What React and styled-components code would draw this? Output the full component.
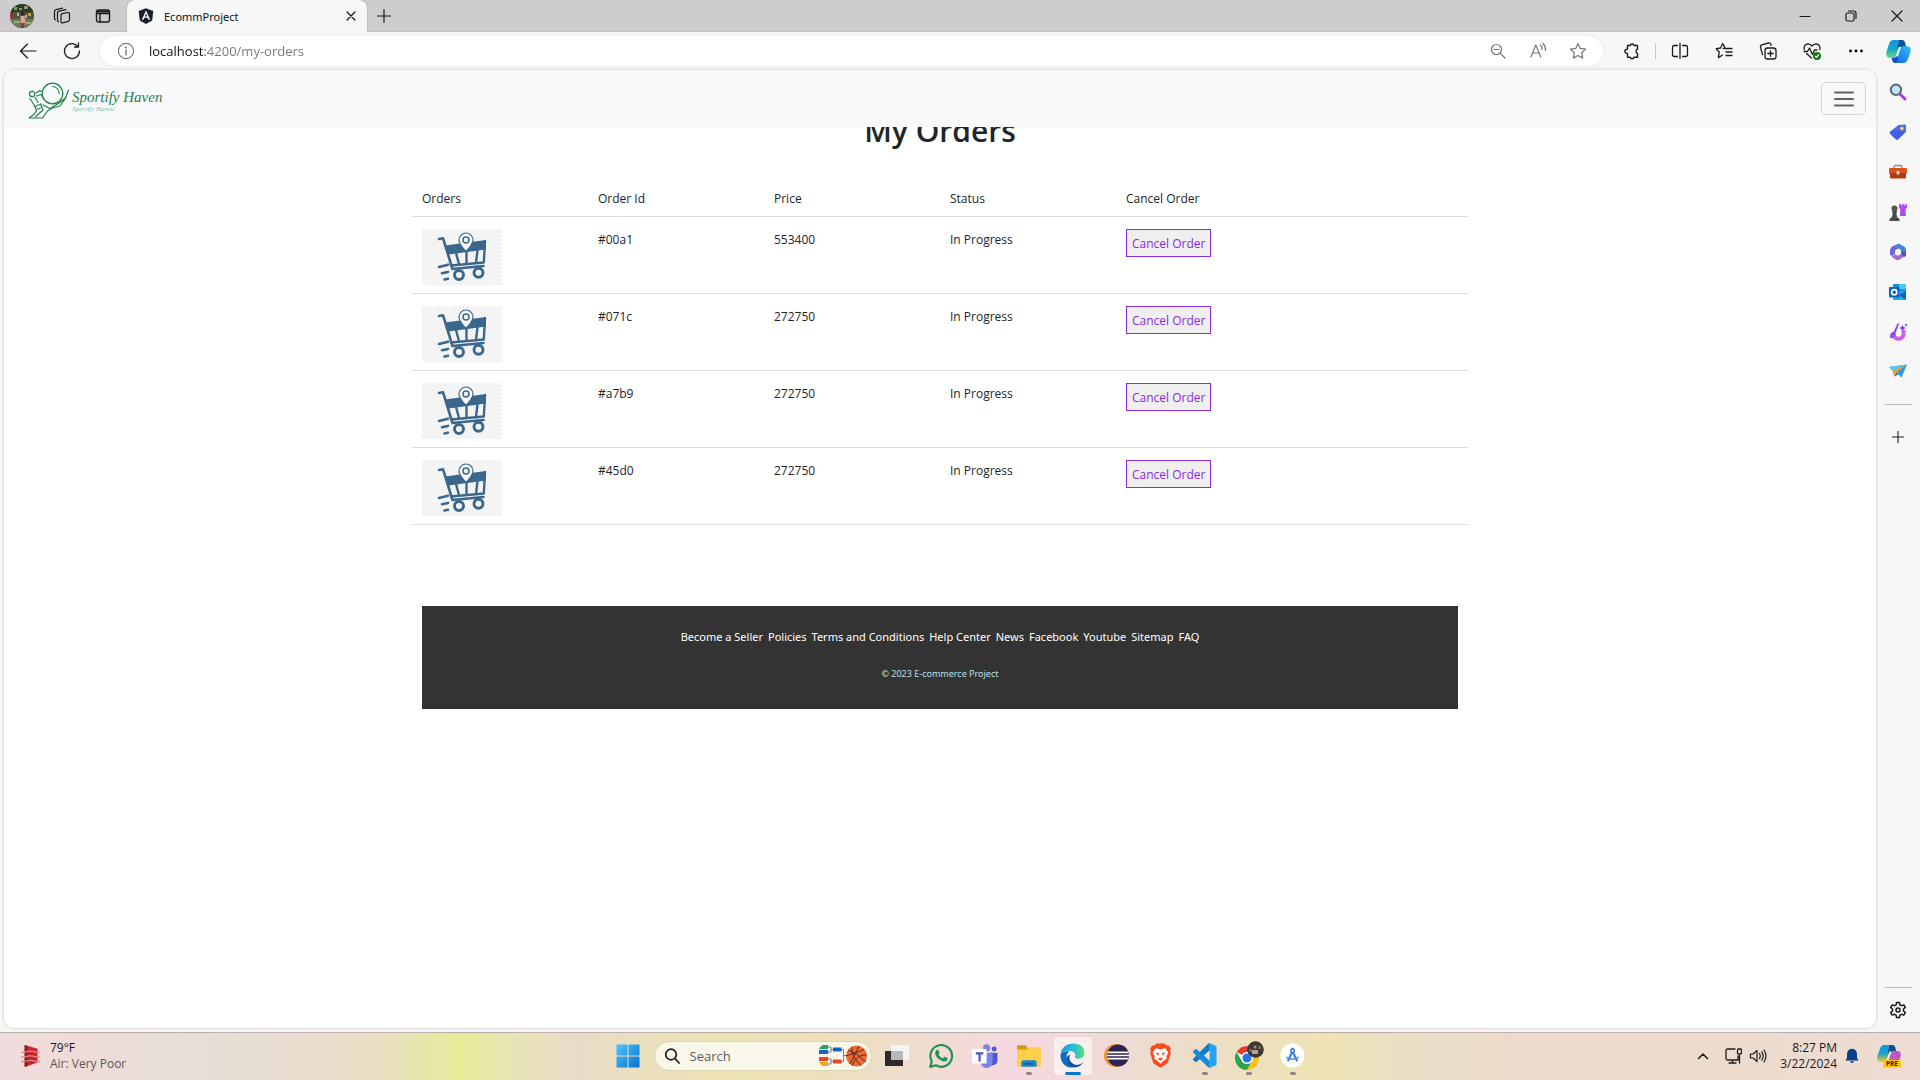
import React from "react";
import styled, { createGlobalStyle, css } from "styled-components";

const Global = createGlobalStyle`
  *, *::before, *::after { box-sizing: border-box; }
  body { margin: 0; font-family: "Open Sans", "Noto Sans", sans-serif; font-size: 12px; color: #212529; }
  button { font: inherit; color: inherit; border: 0; padding: 0; background: none; }
  input { font: inherit; border: 0; padding: 0; background: none; outline: 0; }
  svg { display: block; flex: none; }
`;

/* ---------- browser frame ---------- */

const Desktop = styled.div`
  min-height: 100vh;
  display: flex;
  flex-direction: column;
  background: #f7f7f7;
`;

const TitleBar = styled.header`
  display: flex;
  height: 32px;
  background: #cdcdcd;
  box-shadow: inset 0 -1px #c0c0c0;
  color: #111;
`;

const Cell = styled.button`
  display: flex;
  align-items: center;
  justify-content: center;
  width: ${(p) => p.$w || 44}px;
  height: ${(p) => (p.$h ? p.$h + "px" : "auto")};
  flex: none;
  color: ${(p) => p.$color || "#1b1b1b"};
`;

const Tab = styled.div`
  display: flex;
  align-items: center;
  gap: 10px;
  width: 240px;
  margin-left: 1px;
  padding: 0 2px 0 11px;
  background: #f7f7f7;
  border-radius: 8px 8px 0 0;
  box-shadow: 0 0 2px #999;
  clip-path: inset(-3px -3px 0 -3px);
`;

const TabTitle = styled.span`
  flex: 1;
  font-family: "Noto Sans", sans-serif;
  font-size: 11px;
`;

const Spacer = styled.div`
  flex: 1;
`;

const Toolbar = styled.div`
  display: flex;
  align-items: center;
  height: 38px;
  padding: 0 1px 0 6px;
`;

const AddressBar = styled.label`
  display: flex;
  align-items: center;
  flex: 1;
  height: 30px;
  margin: 0 7px 0 6px;
  padding: 0 5px 0 17px;
  border-radius: 15px;
  background: #fff;
  box-shadow: 0 0 3px #e2e2e2;
`;

const AddressInput = styled.input`
  flex: 1;
  min-width: 0;
  margin-left: 14px;
  font-size: 13px;
  color: transparent;
  background: linear-gradient(to right, #111 56px, #757575 56px);
  background-clip: text;
  -webkit-background-clip: text;
`;

const VRule = styled.div`
  width: 1px;
  height: 16px;
  margin: 0 2px 0 1px;
  background: #c6c6c6;
`;

const Body = styled.div`
  flex: 1;
  display: flex;
  padding: 0 0 4px 4px;
`;

const Viewport = styled.div`
  position: relative;
  flex: 1;
  background: #fff;
  border-radius: 10px;
  overflow: hidden;
  box-shadow: 0 0 3px #bbb;
`;

const SideBar = styled.nav`
  display: flex;
  flex-direction: column;
  align-items: center;
  width: 44px;
  padding-top: 2px;
`;

const HRule = styled.div`
  width: 28px;
  height: 1px;
  background: #bdbdbd;
  margin: ${(p) => p.$m};
`;

/* ---------- shop page ---------- */

const NavBar = styled.header`
  position: absolute;
  inset: 0 0 auto 0;
  z-index: 1;
  display: flex;
  align-items: center;
  justify-content: space-between;
  height: 57px;
  padding: 0 10px 0 24px;
  background: #f8f9fb;
`;

const Brand = styled.a`
  display: flex;
  align-items: center;
  gap: 2px;
  padding-top: 4px;
  color: #24804a;
  text-decoration: none;
  font-family: "Liberation Serif", serif;
  font-style: italic;
`;

const BrandText = styled.span`
  display: flex;
  flex-direction: column;
  font-size: 15px;
  line-height: 16px;
`;

const BrandSub = styled.small`
  font-size: 7px;
  line-height: 8px;
  color: #8fbfa3;
`;

const Toggler = styled.button`
  display: flex;
  align-items: center;
  justify-content: center;
  width: 45px;
  height: 33px;
  border: 1px solid #d3d4d6;
  border-radius: 5px;
  color: #616263;
`;

const Page = styled.main`
  max-width: 1056px;
  margin: 0 auto;
  padding-top: 43px;
`;

const Heading = styled.h1`
  margin: 0 0 31px;
  font-size: 30px;
  line-height: 36px;
  font-weight: 600;
  text-align: center;
`;

const Orders = styled.table`
  width: 100%;
  table-layout: fixed;
  border-spacing: 0;
  line-height: 22px;
`;

const cell = css`
  border-bottom: 1px solid #dcdcdc;
  text-align: left;
  vertical-align: top;
  font-weight: 400;
`;

const Th = styled.th`
  ${cell}
  padding: 8px 10px 6px;
`;

const Td = styled.td`
  ${cell}
  padding: 12px 10px 8px;
`;

const CancelButton = styled.button`
  display: block;
  height: 28px;
  padding: 1px 5px 0;
  border: 1px solid #8a2be2;
  background: #efefef;
  color: #8a2be2;
`;

const Footer = styled.footer`
  margin: 81px 10px 0;
  padding: 22px 20px 26px;
  background: #333;
  text-align: center;
  font-family: "Noto Sans", sans-serif;
  line-height: 18px;
`;

const FooterLinks = styled.nav`
  display: flex;
  flex-wrap: wrap;
  justify-content: center;
  gap: 0 5px;
  margin-bottom: 19px;
`;

const FooterLink = styled.a`
  font-size: 11px;
  color: #fff;
  text-decoration: none;
`;

const Copyright = styled.p`
  margin: 0;
  font-size: 9px;
  color: #b8e0ea;
`;

/* ---------- task bar ---------- */

const TaskBar = styled.footer`
  display: grid;
  grid-template-columns: 1fr auto 1fr;
  align-items: center;
  height: 48px;
  padding-bottom: 2px;
  border-top: 1px solid #b9b0ae;
  background: linear-gradient(
    90deg,
    #f1dcdc 0%, #eddcda 5%, #e5dfd6 10%, #e9dccf 16%, #e8dfc0 20%, #e6eb98 24%,
    #e7e6ae 26%, #e9dcc8 30%, #ebe0ba 35%, #ede4b2 38%, #ece0bc 43%, #f0dcd0 48%,
    #f6d9e0 53%, #efdad6 58%, #eddfc6 63%, #eee4b3 69%, #eadfc5 73%, #eadbcb 80%,
    #ecdccd 90%, #eedbd2 100%
  );
  color: #1b1b1b;
`;

const Weather = styled.button`
  display: flex;
  align-items: center;
  gap: 7px;
  padding-left: 21px;
  justify-self: start;
  text-align: left;
  line-height: 16px;
`;

const Lines = styled.span`
  display: flex;
  flex-direction: column;
  align-items: ${(p) => p.$align || "flex-start"};
`;

const Muted = styled.span`
  color: #5c5754;
`;

const Apps = styled.div`
  display: flex;
  align-items: center;
`;

const SearchBox = styled.label`
  display: flex;
  align-items: center;
  width: 218px;
  height: 30px;
  margin: 0 3px 0 4px;
  padding: 0 4px 0 9px;
  border: 1px solid #dcd3b4;
  border-radius: 15px;
  background: #f9f6ea;
`;

const SearchInput = styled.input`
  flex: 1;
  min-width: 0;
  margin-left: 10px;
  font-size: 13px;
  &::placeholder { color: #5f5d57; opacity: 1; }
`;

const AppCell = styled.button`
  position: relative;
  display: flex;
  align-items: center;
  justify-content: center;
  width: 38px;
  height: 38px;
  margin: 0 3px;
  border-radius: 4px;
  background: ${(p) => (p.$state === "active" ? "rgba(255,255,255,.55)" : "none")};
  &::after {
    content: "";
    position: absolute;
    bottom: 0;
    width: ${(p) => (p.$state === "active" ? 16 : 6)}px;
    height: 3px;
    border-radius: 2px;
    background: ${(p) => (p.$state === "active" ? "#0a78d4" : "#8d8580")};
    display: ${(p) => (p.$state ? "block" : "none")};
  }
`;

const Tray = styled.div`
  display: flex;
  align-items: center;
  justify-self: end;
  padding-right: 2px;
  line-height: 16px;
`;

const Clock = styled.button`
  width: 68px;
  margin-right: 7px;
`;

/* ---------- icons ---------- */

const Line = ({ s = 16, sw = 1.2, vb = 16, children }) => (
  <svg width={s} height={s} viewBox={`0 0 ${vb} ${vb}`} fill="none" stroke="currentColor"
    strokeWidth={sw} strokeLinecap="round" strokeLinejoin="round" aria-hidden="true">{children}</svg>
);
const Pic = ({ s = 24, h, vb = 24, children }) => (
  <svg width={s} height={h || s} viewBox={`0 0 ${vb} ${vb}`} aria-hidden="true">{children}</svg>
);

const Avatar = ({ s = 24 }) => (
  <Pic s={s}>
    <clipPath id={"av" + s}><circle cx="12" cy="12" r="12" /></clipPath>
    <g clipPath={`url(#av${s})`}>
      <rect width="24" height="24" fill="#4c5a3a" />
      <path d="M0 0h24v7q-5 3-10 1T0 9z" fill="#2d3a25" />
      <path d="M4 3h3v3H4zM14 2h4v3h-4zM9 4h3v2H9z" fill="#8a9a78" />
      <path d="M0 10h4v3H0z" fill="#b3263a" /><path d="M18 9h3v3h-3z" fill="#d99a2b" />
      <path d="M7 9h2v3H7zM15 11h2v3h-2z" fill="#b5b3ac" />
      <path d="M0 15h24v9H0z" fill="#6f7b52" />
      <path d="M4 17h6v2H4zM16 18h5v2h-5z" fill="#a7a58c" />
      <circle cx="12.500" cy="9.500" r="2" fill="#3a2420" />
      <path d="M10.500 12h4l1 7h-2l-1 4h-1.500v-5z" fill="#e0a3a0" /><path d="M11 19h3v5h-3z" fill="#a52b3e" />
    </g>
  </Pic>
);
const Workspaces = () => (
  <Line s={18} vb={18}>
    <path d="M9.300 6.700l5.700-1.200q1.500-.2 1.500 1.300v6q0 1.200-1.200 1.500l-5.700 1.600q-1.600.4-1.600-1.100V8q0-1.100 1.300-1.300z" />
    <path d="M4.500 13.500V6q0-1.500 1.500-1.800l7-1.500M1.500 11.500V4.500Q1.500 3 3 2.700l6.500-1.500M4.500 13.500q0 1 1 1.300M1.500 11.500q0 1 1 1.300" />
  </Line>
);
const TabActions = () => (
  <Line sw={1.400}><rect x="1.500" y="2" width="13" height="12" rx="2" /><path d="M1.500 5.500h13M5 5.500V14" /><path d="M2.500 3.500h11" strokeWidth="2" /></Line>
);
const Angular = () => (
  <Pic s={16} vb={16}><path d="M8 .3l7.300 2.600-1.100 9.600L8 15.900l-6.200-3.400L.7 2.900z" fill="#1a222c" />
    <path d="M8 2.400L3.800 11.700h1.600l.9-2h3.400l.9 2h1.600zM8 5.500l1.200 2.900H6.800z" fill="#fff" /></Pic>
);
const Close = ({ s = 16 }) => <Line s={s} sw={1.500}><path d="M3.500 3.500l9 9M12.500 3.500l-9 9" /></Line>;
const Plus = ({ s = 16 }) => <Line s={s}><path d="M8 1.500v13M1.500 8h13" /></Line>;
const Minimize = () => <Line><path d="M3 8.500h10" /></Line>;
const Restore = () => <Line><rect x="3" y="5" width="8" height="8" rx="1.500" /><path d="M5.500 3h5q2.500 0 2.500 2.500v5" /></Line>;
const CloseWin = () => <Line><path d="M3 3l10 10M13 3L3 13" /></Line>;
const Back = () => <Line s={18} vb={18}><path d="M1.500 9H17M8.500 2l-7 7 7 7" /></Line>;
const Reload = () => <Line s={18} vb={18} sw={1.300}><path d="M16.500 9A7.500 7.500 0 1 1 14.800 4.300M15.500 1v4h-4" /></Line>;
const Info = () => <Line s={18} vb={18} sw={1.100}><circle cx="9" cy="9" r="7.600" /><path d="M9 8v5" strokeWidth="1.400" /><circle cx="9" cy="5.500" r=".5" fill="currentColor" /></Line>;
const ZoomOut = () => <Line><circle cx="6.500" cy="6.500" r="5" /><path d="M4 6.500h5M10.300 10.300L15 15" /></Line>;
const ReadAloud = () => <Line s={18} vb={18}><path d="M2 15L6.800 3l5 12M3.700 11h6.300M11.500 3q2 2 1.500 4.500M14 1.500q3 3 2.500 7" /></Line>;
const starPath = "M9 1.500l2.300 4.900 5.300.7-3.900 3.700 1 5.300L9 13.500l-4.700 2.600 1-5.300L1.400 7.100l5.300-.7z";
const Star = () => <Line s={18} vb={18}><path d={starPath} /></Line>;
const Puzzle = () => <Line s={18} vb={18} sw={1.400}><path d="M4.500 3.500h2.700a2 2 0 0 1 3.900 0h3.400v3.700a2.300 2.300 0 0 0 0 4.300V15.300h-3.400a2.100 2.100 0 0 1-4 0H4.500v-3.800a2.200 2.200 0 1 1 0-4.300z" /></Line>;
const Split = () => <Line s={18} vb={18} sw={1.300}><path d="M6.500 3.500h-3q-2 0-2 2v7q0 2 2 2h3M11.500 3.500h3q2 0 2 2v7q0 2-2 2h-3M9 1.500v15" /></Line>;
const Favorites = () => <Line s={18} vb={18} sw={1.300}><path d="M10 6L7.700 1.500 5.500 6l-4.300.7 3 3.300-.8 5.700L7.500 13M10.500 6.500h6.500M11 10h6M11 13.500h6M8 6.300h2" /></Line>;
const Collections = () => <Line s={18} vb={18} sw={1.300}><rect x="6" y="6" width="11" height="11" rx="2.500" /><path d="M11.500 8.800v5.400M8.800 11.500h5.400M3.500 12.500L1.500 5.300q-.4-2 1.400-2.500L9.600 1q1.700-.3 2.200 1.300l.3 1" /></Line>;
const Health = () => (
  <Line s={18} vb={18} sw={1.300}>
    <path d="M1.200 7.500Q.5 2.200 5 1.900 7.500 2 9 4q1.500-2 4-2.100 4.500.3 3.900 5.600M3.500 11.500L8.500 16M1 9.500h3.500L6.500 6l3 6.500L11.500 8h2.500" />
    <circle cx="14" cy="14" r="4" fill="#107c10" stroke="none" /><path d="M12.500 14.500l1 .9 2-2.400" stroke="#fff" />
  </Line>
);
const Dots = () => <Pic s={16} vb={16}><circle cx="2.500" cy="8" r="1.400" /><circle cx="8" cy="8" r="1.400" /><circle cx="13.500" cy="8" r="1.400" /></Pic>;
const Copilot = ({ pre }) => (
  <Pic s={pre ? 24 : 25}>
    <defs>
      <linearGradient id={"cA" + !!pre} x1="0" y1="0" x2="0" y2="1"><stop stopColor="#1594e4" /><stop offset=".5" stopColor="#17a6c8" /><stop offset="1" stopColor={pre ? "#f5c52c" : "#5fd88a"} /></linearGradient>
      <linearGradient id={"cB" + !!pre} x1="1" y1="0" x2="0" y2="1"><stop stopColor={pre ? "#a64df0" : "#2cc4f2"} /><stop offset="1" stopColor={pre ? "#f06a6a" : "#1463e6"} /></linearGradient>
    </defs>
    <path d="M7 1h9l-4.500 13.500Q10.300 18 7.500 18H4Q-.8 18 .5 12L3 4.500Q4.200 1 7 1z" fill={`url(#cA${!!pre})`} />
    <path d="M12.500 1h3q2.500 0 3.200 4l.5 2.500h-3q-1.700 0-2.400 1.700l-1.300 3.300-1.500-5z" fill="#14508f" />
    <path d="M17 23H8l4.500-12.500Q13.700 7 16.500 7H20q4.700 0 3.500 5.500L21 19.500q-1.200 3.500-4 3.500z" fill={`url(#cB${!!pre})`} />
    <path d="M14.500 7.600L11 18.200 9.200 17l3.200-9.400z" fill={pre ? "#f4e6e0" : "#f7f7f7"} />
    {!pre && <path d="M5.400 18h2.400q2 0 2.900-2.200l1 3.200q-1.200 4-3.200 4-2 0-2.600-2.500z" fill="#1c49c9" />}
    {pre && <><rect x="6" y="16" width="18" height="7.500" rx="1.500" fill="#fdc806" />
      <text x="15" y="22.200" fontSize="6.500" fontWeight="700" textAnchor="middle" fill="#2b2200" fontFamily="Open Sans, sans-serif">PRE</text></>}
  </Pic>
);

const SideSearch = () => <Pic s={18} vb={18}><path d="M11.500 11.500l4.500 4.500" stroke="#b035ee" strokeWidth="3" strokeLinecap="round" /><circle cx="7" cy="6.800" r="5.200" fill="#bfe3fb" stroke="#61676b" strokeWidth="2" /></Pic>;
const Tag = () => <Pic s={18} vb={18}><path d="M9.500 2l6.500-.5q1 0 1 1V8.500L9.500 16q-1.500 1.300-3 0L1.500 11.300q-1.200-1.500 0-3z" fill="#4a6cf0" /><path d="M1.500 8.300L17 8.500 9.500 16q-1.500 1.300-3 0L1.500 11.300q-1.200-1.500 0-3z" fill="#3f56ea" opacity=".7" /><circle cx="13" cy="5.500" r="1.700" fill="#ffe05a" stroke="#e0a500" strokeWidth=".6" /></Pic>;
const Toolbox = () => <Pic s={18} vb={18}><path d="M5 6V4q0-1.500 1.500-1.500h5Q13 2.500 13 4v2" fill="none" stroke="#8b8b8b" strokeWidth="1.300" /><rect y="5" width="18" height="6" rx="1" fill="#d9531e" /><path d="M1 10h16v4.500q0 1-1 1H2q-1 0-1-1z" fill="#b23a10" /><path d="M7.500 8h3v3q-1.500 1.500-3 0z" fill="#d8d8d8" /></Pic>;
const Chess = () => <Pic s={18} vb={18}><path d="M10 1h2v1.500h1.300V1h2v1.500h1.200V1H18v4l-1.500 1 .5 7h-6l.3-7L10 5z" fill="#b14cf0" /><circle cx="5.500" cy="5.500" r="3" fill="#555" /><path d="M3 8h5v1.500H7.300l.7 4.500 2.500 2v2H.5v-2L3 14l.8-4.500H3z" fill="#4a4a4a" /></Pic>;
const M365 = () => (
  <Pic s={18} vb={18}>
    <path d="M10 .8L4 3Q1 4.500 1 8v3q0 2 2 2 3-1 3-4V8l4-3z" fill="#6f63d6" />
    <path d="M8 1.200Q9.500.3 11 1.200l4.500 2.600Q17 5 17 6.500v5L12 9V7L7 4z" fill="#3f86d8" />
    <path d="M17 7.500v3q0 2-1.500 3L10 16.800q-1.500.7-3 0L2 13.500q3 .3 4-2.500l3 1.700 5-3z" fill="#9b6fd6" />
    <path d="M12 9.300l5-1v3.200q0 1.500-1.500 2.500L12 11z" fill="#4c52b8" />
    <path d="M9 5.800l3 1.700v3L9 12.200l-3-1.700v-3z" fill="#f7f7f7" />
  </Pic>
);
const Outlook = () => <Pic s={18} vb={18}><rect x="4" y="1" width="13" height="9" rx="1" fill="#1490df" /><path d="M10 1h6q1 0 1 1v4h-7z" fill="#50c8f5" /><path d="M4 9l13-1v8q0 1-1 1H5q-1 0-1-1z" fill="#28a8ea" /><path d="M17 8v9l-7-5z" fill="#1066b5" /><rect y="4" width="10.500" height="10.500" rx="1" fill="#0c64c0" /><circle cx="5.200" cy="9.200" r="2.600" fill="none" stroke="#fff" strokeWidth="1.600" /></Pic>;
const Designer = () => (
  <Pic s={20} vb={20}>
    <path d="M5.500 12q.5 5 5.500 4.700 5.500-.7 4.500-7.200" fill="none" stroke="#cf5fec" strokeWidth="4" strokeLinecap="round" />
    <path d="M9.700 1q1.500 0 1.200 1.500L7.500 11q.5 4-3.500 5H1.500q1-1 .8-3Q2.500 10.500 5.500 10z" fill="#8450e4" />
    <path d="M14.500 3l1 2 2.500 1-2.500 1-1 2.500-1-2.500L11 6l2.500-1zM18 1l.5 1.500L20 3l-1.500.6L18 5l-.5-1.400L16 3l1.500-.5z" fill="#7a3ce8" />
  </Pic>
);
const Drop = () => <Pic s={18} vb={18}><path d="M0 4l18-2.500-5.500 13L8 10z" fill="#2f96ee" /><path d="M0 4l18-2.500L4 8.500z" fill="#57c3f7" /><path d="M18 1.500L3.500 8 5 13.500l2.500-4z" fill="#f2a31c" /><path d="M7.500 9.800L5 13.800l4-2.500z" fill="#1759a8" /></Pic>;
const Gear = () => <Line s={18} vb={18} sw={1.500}><circle cx="9" cy="9" r="2" /><path d="M7.600 1.500h2.800l.5 2.300 1.600.9 2.300-.8 1.500 2.500-1.800 1.600v2l1.800 1.600-1.500 2.500-2.300-.8-1.600.9-.5 2.300H7.600l-.5-2.300-1.600-.9-2.300.8-1.500-2.500L3.500 10V8L1.700 6.400l1.500-2.500 2.300.8 1.600-.9z" /></Line>;

const BrandMark = () => (
  <svg width="42" height="37" viewBox="0 0 42 37" fill="none" stroke="#24804a" strokeWidth="1.200" strokeLinecap="round" strokeLinejoin="round" aria-hidden="true">
    <circle cx="24.500" cy="11.500" r="10.300" /><path d="M24.500 4.500q6 .5 6.700 7" />
    <circle cx="4.200" cy="12" r="2.700" />
    <path d="M8 11l3.500-2.300 2.700.8M8.500 14l4.500-1.500 2.500 4" />
    <path d="M2 16.500l5 8 6-2.500M7 15.500l3 5" />
    <path d="M7 24.500l1.500 4-2.500 4-4.500 3M12.500 22l2.500 6-4.500 4-3 3M9.500 27l3-1" />
    <path d="M1 36h13.500l5-7 4.500-3 8-2 5-7 3.500-9M15 23l6 3M22 26.500l10-6 6-5" />
  </svg>
);

const CartPicture = () => (
  <svg width="80" height="56" viewBox="0 0 80 56" role="img" aria-label="Shopping cart">
    <defs><pattern id="chk" width="4" height="4" patternUnits="userSpaceOnUse"><rect width="4" height="4" fill="#f8f8f8" /><path d="M0 0h2v2H0zM2 2h2v2H2z" fill="#f0f0f0" /></pattern></defs>
    <rect width="80" height="56" fill="url(#chk)" />
    <path d="M23 16.500L64 11v9.500L26.500 25.500z" fill="#3b678c" />
    <g fill="none" stroke="#3b678c" strokeWidth="2" strokeLinecap="round" strokeLinejoin="round">
      <path d="M17 10l4-.8L30.500 40l31-3" strokeWidth="2.600" /><path d="M63 12l-1.200 21.500L29 36.500" strokeWidth="2.400" />
      <path d="M34 24l3 11M44.500 22v12.500M55.500 21l-1.500 13" strokeWidth="2.400" />
      <circle cx="37" cy="46" r="4.500" strokeWidth="2.900" /><circle cx="56.500" cy="43.800" r="4.500" strokeWidth="2.900" />
      <path d="M17 38l9-2.300M20 44.200l6-1.300M22.500 50.500l3.500-.7" strokeWidth="2.600" />
    </g>
    <path d="M44 22.500Q37 15 37 11a7 7 0 0 1 14 0q0 4-7 11.500z" fill="#f8f8f8" stroke="#3b678c" strokeWidth="1.200" />
    <circle cx="44" cy="11" r="3" fill="none" stroke="#3b678c" strokeWidth="1.500" />
  </svg>
);

const WeatherIcon = () => (
  <Pic s={22} h={26}><path d="M4 0l14 4v15L4 24z" fill="#c3262b" /><path d="M4 0l3 1v22l-3 1z" fill="#8c1a20" />
    <g fill="none" stroke="#e5868a" strokeWidth="1.400"><path d="M0 8h4q7-2.500 12 0h5M0 13h4q7-2.500 12 0h5M0 18h4q7-2.500 12 0h5" /></g></Pic>
);
const Start = () => (
  <Pic s={24}><defs><linearGradient id="win" x1="0" y1="0" x2="1" y2="1"><stop stopColor="#4cc6fb" /><stop offset="1" stopColor="#0470d0" /></linearGradient></defs>
    <path d="M.5.500h11v11H.5zM12.500.500h11v11h-11zM.5 12.500h11v11H.5zM12.500 12.500h11v11h-11z" fill="url(#win)" /></Pic>
);
const Magnifier = () => <Line sw={1.700}><circle cx="7" cy="6.500" r="5.300" /><path d="M11 10.500l4 4.500" /></Line>;
const Bracket = () => (
  <svg width="48" height="22" viewBox="0 0 48 22" aria-hidden="true">
    <path d="M0 4q2-4 5-4h4v4z" fill="#21a366" /><path d="M0 5h9v4H0z" fill="#1565c0" /><path d="M0 12h9v4H0z" fill="#f0432a" /><path d="M0 17h9v4H5q-3 0-5-4z" fill="#f2a516" />
    <path d="M9 2h3v5H9M12 4.500h2M9 14h3v5H9M12 16.500h2M22 4.500h2.500v12H22M24.500 10.500H28" fill="none" stroke="#77808c" />
    <rect x="14" y="2.500" width="8.500" height="4" fill="#1565c0" /><rect x="14" y="14.500" width="8.500" height="4" fill="#f0432a" />
    <circle cx="37.500" cy="11" r="10.500" fill="#ee6c33" />
    <path d="M29 5q9 3 18 12M40 1q-5 10-9 18M27 11q10-3 18-6.500M33 20.500Q38 9 47.500 10M33 2q-1 10 9 18.500" fill="none" stroke="#5c2a1c" />
  </svg>
);
const TaskView = () => <Pic s={24}><path d="M0 7h18v15H0z" fill="#2a2a2a" /><path d="M6 1h18v15H6z" fill="#f4f4f4" /><path d="M6 7h12v9H6z" fill="#b9b9b9" /></Pic>;
const WhatsApp = () => <Pic s={26}><path d="M2 22l1.500-5.200A10 10 0 1 1 7.300 20.600z" fill="none" stroke="#1f9257" strokeWidth="2" strokeLinejoin="round" /><path d="M7.500 7q1.500-1.500 2.200 0l.9 2q.2.600-.9 1.700 1.300 2.500 4 3.600l1.200-1.400q.4-.3 1 0l2 1q.600.400 0 1.700-1.200 2-3.700 1.400-5.500-1.500-7.500-6.300Q6.400 8.500 7.500 7z" fill="#1f9257" /></Pic>;
const Teams = () => <Pic s={26}><circle cx="13.500" cy="4.500" r="3.300" fill="#7b83eb" /><circle cx="20.500" cy="5.500" r="2.300" fill="#5059c9" /><path d="M17 9h6.500v7q0 4-4 4.500H17z" fill="#5059c9" /><path d="M8 9h11v8q0 6-5.500 6T8 17z" fill="#7b83eb" /><rect x="0" y="5.500" width="13.500" height="13.500" rx="1" fill="#fff" /><path d="M3.500 8.500h7v2H8V17H6v-6.500H3.500z" fill="#4b53bc" /></Pic>;
const Explorer = () => <Pic s={26}><path d="M1 3q0-1 1-1h7l2 3v3H1z" fill="#d9980f" /><path d="M1 6h9l2-2h10q1 0 1 1v16q0 1-1 1H2q-1 0-1-1z" fill="#fdcf4a" /><path d="M5 22v-4q0-2 2-2h10q2 0 2 2v4z" fill="#1b84cf" /><path d="M8 18.500h8v1.500H8z" fill="#0c5a9c" /></Pic>;
const Edge = () => (
  <Pic s={25}><defs><linearGradient id="e1" x1="0" y1=".3" x2="1" y2=".3"><stop stopColor="#1b9de2" /><stop offset=".6" stopColor="#2fc0cf" /><stop offset="1" stopColor="#5fe06a" /></linearGradient></defs>
    <path d="M.5 11Q2 .5 12.500.500 23.500 1 23.500 9.500q-.5 5.500-6 5.500-4 0-3-2 .500-.700.300-1.500Q14 8 9.500 7.500 3 7.500.5 11z" fill="url(#e1)" />
    <path d="M.5 11Q3 7.500 9 8q-3 2-2.500 6.500.700 6 7 8.500Q8 25 3.500 20.500 0 16.500.5 11z" fill="#0f6cc4" />
    <path d="M9.500 11q-2 6 3 9t10-1.500q-3 4.500-8.500 5-6.500-1.500-7.400-8.500Q6.600 12 9.500 11z" fill="#0b4f9e" /></Pic>
);
const Eclipse = () => <Pic s={25}><circle cx="11" cy="12" r="11" fill="#f2942b" /><circle cx="13.500" cy="12" r="10.500" fill="#2c2255" /><path d="M3.300 9h20.200M3 12h21M3.300 15h20.200" stroke="#fff" strokeWidth="1.500" /></Pic>;
const Brave = () => <Pic s={25}><path d="M8 .5h8l2 2h2l2 3-.7 2 .5 2.500-3 9.500L12 23.700 5.200 19.500l-3-9.500.5-2.500L2 5.500l2-3h2z" fill="#fb4a1d" /><path d="M7.500 5L12 6l4.500-1 3 4-2 4 .5 2-3 2L12 20l-3-3-3-2 .5-2-2-4z" fill="#fff" /><path d="M7.500 9l3 .7-.7 3zM16.500 9l-3 .7.700 3zM9.500 15L12 14l2.500 1L12 17z" fill="#fb4a1d" /></Pic>;
const VSCode = () => <Pic s={25}><path d="M17 0l6.500 3v18L17 24z" fill="#27a3ee" /><path d="M17 0v7L4 18.500 1 16.500V15L15.500.8z" fill="#0e7ac8" /><path d="M17 24v-7L4 5.500 1 7.500V9l14.500 14.200z" fill="#1389d8" /></Pic>;
const Chrome = () => (
  <svg width="30" height="30" viewBox="0 0 30 30" aria-hidden="true">
    <circle cx="13" cy="17" r="12" fill="#fff" />
    <path d="M2.600 11A12 12 0 0 1 23.400 11H13a6 6 0 0 0-5.200 3z" fill="#e33b2e" /><path d="M2.600 11A12 12 0 0 0 13 29l5.200-9A6 6 0 0 1 7.800 20z" fill="#2da14c" /><path d="M23.400 11A12 12 0 0 1 13 29l5.200-9A6 6 0 0 0 17 12.300V11z" fill="#fbc116" />
    <circle cx="13" cy="17" r="5.600" fill="#fff" /><circle cx="13" cy="17" r="4.500" fill="#2a75e8" />
    <circle cx="21.500" cy="8.500" r="8.300" fill="#3c3a30" /><path d="M15 8h3v3h-3zM24 5h3v3h-3z" fill="#6b6b55" /><circle cx="21" cy="6" r="1.500" fill="#a88" /><path d="M18 9h6v4h-6z" fill="#b8a0a2" />
  </svg>
);
const Studio = () => <Pic s={25}><circle cx="12" cy="12" r="11.500" fill="#fff" /><circle cx="12" cy="7.500" r="1.700" fill="none" stroke="#3b7be0" strokeWidth="1.400" /><path d="M11.300 9.300L7.500 17.500M12.700 9.300l3.800 8.200" stroke="#3b7be0" strokeWidth="2" /><path d="M6 13.500q6 4 12 0" stroke="#4b8df0" strokeWidth="1.400" fill="none" /><path d="M12 4.500v1.500" stroke="#2f5fc0" strokeWidth="1.500" /></Pic>;
const ChevronUp = () => <Line sw={1.500}><path d="M3.500 10.500L8 6l4.500 4.500" /></Line>;
const Network = () => <Line s={18} vb={18} sw={1.300}><path d="M11 2H3.500Q2 2 2 3.500v8Q2 13 3.500 13h10.500V9M5 16h7M8.500 13v3M15.500 8.500V16" /><rect x="13.500" y="2" width="4" height="5" rx="1" /></Line>;
const Volume = () => <Line s={18} vb={18} sw={1.200}><path d="M1.500 7v4h2.500L8 14.500v-11L4 7zM10.500 6.500q1.500 2.500 0 5M12.800 4.800q2.800 4.200 0 8.400M15 3q4 6 0 12" /></Line>;
const Bell = () => <Pic s={16} vb={16}><path d="M8 .8q5 .5 5 5.700v3.500l1.700 2.500H1.300L3 10V6.500Q3 1.300 8 .8z" fill="#0a3f8e" /><path d="M6 13.300h4Q9.700 15 8 15t-2-1.700z" fill="#0a3f8e" /></Pic>;

/* ---------- data ---------- */

const toolbarActions = [
  ["Split screen", Split], ["Favorites", Favorites], ["Collections", Collections],
  ["Browser essentials", Health], ["Settings and more", Dots],
];
const sideTools = [
  ["Search", SideSearch], ["Shopping", Tag], ["Tools", Toolbox], ["Games", Chess],
  ["Microsoft 365", M365], ["Outlook", Outlook], ["Designer", Designer], ["Drop", Drop],
];
const columns = ["Orders", "Order Id", "Price", "Status", "Cancel Order"];
const orders = [
  { id: "#00a1", price: 553400 }, { id: "#071c", price: 272750 },
  { id: "#a7b9", price: 272750 }, { id: "#45d0", price: 272750 },
];
const footerLinks = ["Become a Seller", "Policies", "Terms and Conditions", "Help Center", "News", "Facebook", "Youtube", "Sitemap", "FAQ"];
const apps = [
  ["Task view", TaskView], ["WhatsApp", WhatsApp], ["Teams", Teams], ["File Explorer", Explorer, "open"],
  ["Edge", Edge, "active"], ["Eclipse", Eclipse], ["Brave", Brave], ["Visual Studio Code", VSCode, "open"],
  ["Chrome", Chrome, "open"], ["Android Studio", Studio, "open"],
];

export default function App() {
  return (
    <Desktop>
      <Global />
      <TitleBar>
        <Cell $w={44} aria-label="Profile"><Avatar /></Cell>
        <Cell $w={36} aria-label="Workspaces"><Workspaces /></Cell>
        <Cell $w={46} aria-label="Tab actions"><TabActions /></Cell>
        <Tab>
          <Angular />
          <TabTitle>EcommProject</TabTitle>
          <Cell $w={28} aria-label="Close tab"><Close s={14} /></Cell>
        </Tab>
        <Cell $w={34} aria-label="New tab"><Plus /></Cell>
        <Spacer />
        <Cell $w={46} aria-label="Minimize"><Minimize /></Cell>
        <Cell $w={46} aria-label="Restore"><Restore /></Cell>
        <Cell $w={46} aria-label="Close"><CloseWin /></Cell>
      </TitleBar>

      <Toolbar>
        <Cell aria-label="Back"><Back /></Cell>
        <Cell aria-label="Refresh"><Reload /></Cell>
        <AddressBar aria-label="Address">
          <Cell as="span" $w={18} $color="#757575"><Info /></Cell>
          <AddressInput aria-label="Address" defaultValue="localhost:4200/my-orders" />
          <Cell $w={40} $color="#757575" aria-label="Zoom"><ZoomOut /></Cell>
          <Cell $w={40} $color="#757575" aria-label="Read aloud"><ReadAloud /></Cell>
          <Cell $w={40} $color="#757575" aria-label="Add to favorites"><Star /></Cell>
        </AddressBar>
        <Cell aria-label="Extensions"><Puzzle /></Cell>
        <VRule />
        {toolbarActions.map(([name, Icon]) => <Cell key={name} aria-label={name}><Icon /></Cell>)}
        <Cell $w={41} aria-label="Copilot"><Copilot /></Cell>
      </Toolbar>

      <Body>
        <Viewport>
          <NavBar>
            <Brand href="#">
              <BrandMark />
              <BrandText>Sportify Haven<BrandSub>Sportify Haven</BrandSub></BrandText>
            </Brand>
            <Toggler aria-label="Toggle navigation"><Line s={24} vb={24} sw={2}><path d="M3 5.500h18M3 12h18M3 18.500h18" /></Line></Toggler>
          </NavBar>
          <Page>
            <Heading>My Orders</Heading>
            <Orders>
              <thead>
                <tr>{columns.map((c) => <Th key={c} scope="col">{c}</Th>)}<Th as="td" /></tr>
              </thead>
              <tbody>
                {orders.map((o) => (
                  <tr key={o.id}>
                    <Td><CartPicture /></Td>
                    <Td>{o.id}</Td>
                    <Td>{o.price}</Td>
                    <Td>In Progress</Td>
                    <Td><CancelButton>Cancel Order</CancelButton></Td>
                    <Td />
                  </tr>
                ))}
              </tbody>
            </Orders>
            <Footer>
              <FooterLinks>{footerLinks.map((l) => <FooterLink key={l} href="#">{l}</FooterLink>)}</FooterLinks>
              <Copyright>© 2023 E-commerce Project</Copyright>
            </Footer>
          </Page>
        </Viewport>
        <SideBar>
          {sideTools.map(([name, Icon]) => <Cell key={name} $h={40} aria-label={name}><Icon /></Cell>)}
          <HRule $m="12px 0" />
          <Cell $h={40} aria-label="Customize"><Plus s={14} /></Cell>
          <Spacer />
          <HRule $m="0 0 4px" />
          <Cell $h={36} aria-label="Settings"><Gear /></Cell>
        </SideBar>
      </Body>

      <TaskBar>
        <Weather>
          <WeatherIcon />
          <Lines><span>79°F</span><Muted>Air: Very Poor</Muted></Lines>
        </Weather>
        <Apps>
          <Cell aria-label="Start"><Start /></Cell>
          <SearchBox>
            <Magnifier />
            <SearchInput placeholder="Search" aria-label="Search" />
            <Bracket />
          </SearchBox>
          {apps.map(([name, Icon, state]) => <AppCell key={name} $state={state} aria-label={name}><Icon /></AppCell>)}
        </Apps>
        <Tray>
          <Cell $w={32} aria-label="Hidden icons"><ChevronUp /></Cell>
          <Cell $w={28} aria-label="Network"><Network /></Cell>
          <Cell $w={22} aria-label="Volume"><Volume /></Cell>
          <Clock><Lines $align="flex-end"><span>8:27 PM</span><span>3/22/2024</span></Lines></Clock>
          <Cell $w={16} aria-label="Notifications"><Bell /></Cell>
          <Cell $w={58} aria-label="Copilot preview"><Copilot pre /></Cell>
        </Tray>
      </TaskBar>
    </Desktop>
  );
}
